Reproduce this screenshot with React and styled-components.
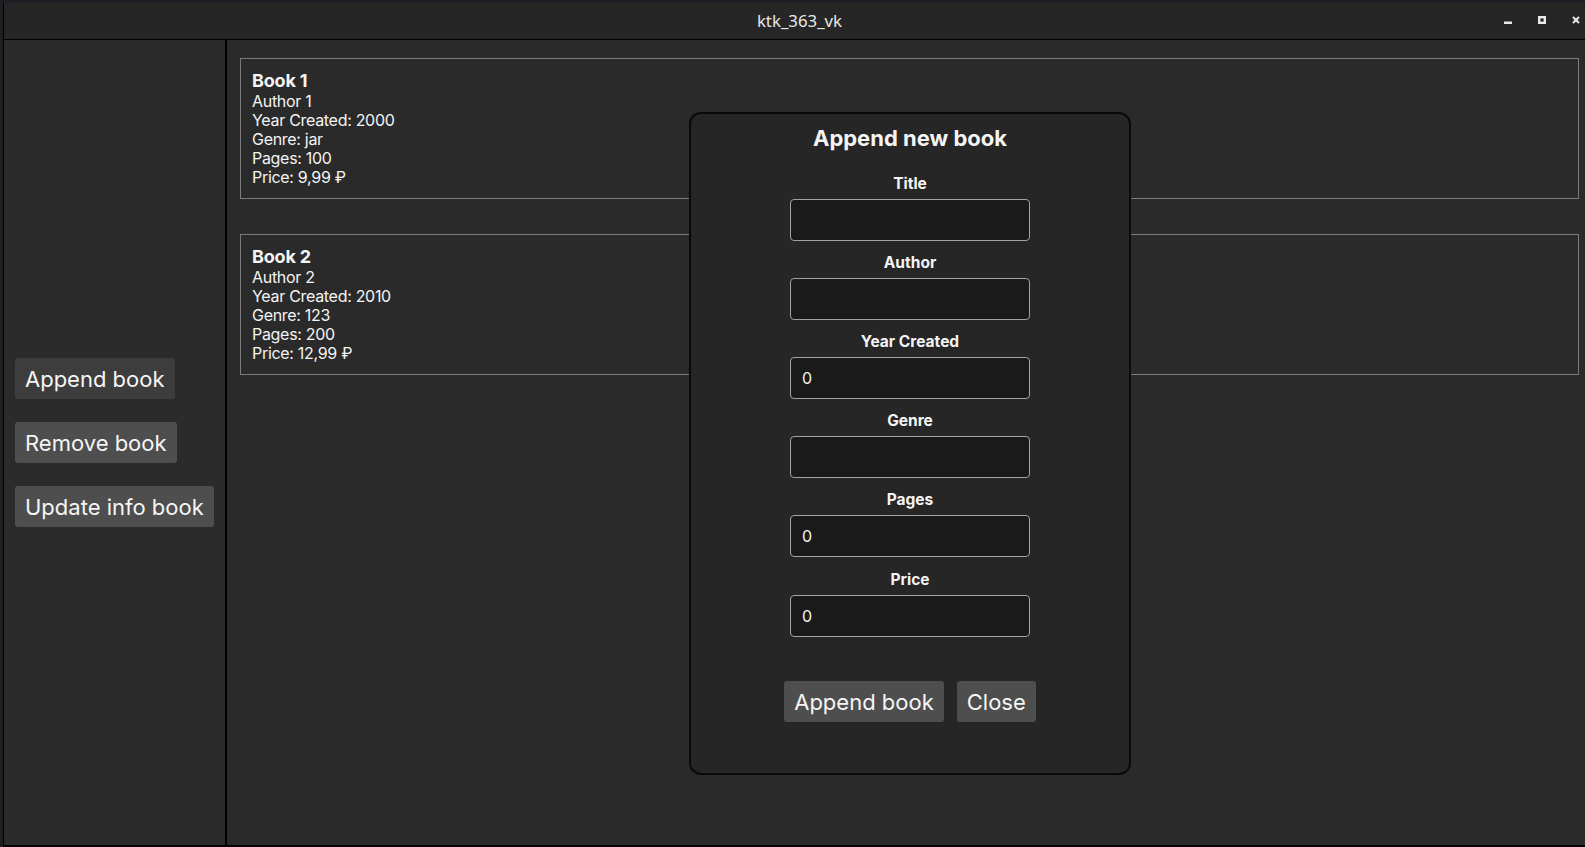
import React from "react";
import styled, { createGlobalStyle } from "styled-components";

const GlobalStyle = createGlobalStyle`
  html, body {
    margin: 0;
    padding: 0;
    background: #1e1f22;
    overflow: hidden;
  }
  * {
    box-sizing: border-box;
  }
`;

const Desktop = styled.div`
  height: 847px;
  padding: 3px 0 0 3px;
`;

const Window = styled.div`
  height: 844px;
  display: flex;
  flex-direction: column;
  border-left: 1px solid #000;
  background: #2b2b2b;
  font-family: Inter, "Noto Sans", sans-serif;
  color: #f4f4f4;
`;

const TitleBar = styled.div`
  height: 37px;
  flex-shrink: 0;
  display: grid;
  grid-template-columns: 1fr auto 1fr;
  align-items: center;
  background: #262626;
  border-bottom: 1px solid #000;
`;

const WindowTitle = styled.div`
  grid-column: 2;
  padding-left: 10px;
  font-family: "Noto Sans", sans-serif;
  font-size: 16.8px;
  color: #e6e6e6;
  margin-top: -2px;
`;

const Controls = styled.div`
  grid-column: 3;
  justify-self: end;
  display: flex;
  align-items: center;
  gap: 26px;
  padding-right: 5px;
  margin-top: -2px;
`;

const Body = styled.div`
  flex: 1;
  display: flex;
  border-bottom: 2px solid #000;
  min-height: 0;
`;

const Sidebar = styled.div`
  width: 223px;
  flex-shrink: 0;
  display: flex;
  flex-direction: column;
  justify-content: center;
  align-items: flex-start;
  gap: 23px;
  padding-left: 11px;
  background: #2b2b2b;
  border-right: 2px solid #000;
`;

const Button = styled.button`
  height: 41px;
  padding: 0 10px;
  border: none;
  border-radius: 3px;
  background: ${(p) => (p.$dim ? "#3d3d3d" : "#4e4e4e")};
  color: #f5f5f5;
  font-family: Inter, "Noto Sans", sans-serif;
  font-size: 22px;
  cursor: pointer;
`;

const Main = styled.div`
  position: relative;
  flex: 1;
  padding: 18px 6px 0 13px;
  background: #2a2a2a;
`;

const Card = styled.div`
  border: 1px solid #7c7c7c;
  padding: 11px 11px 11px;
  margin-bottom: 35px;
`;

const BookTitle = styled.div`
  font-size: 18px;
  font-weight: 700;
  line-height: 22px;
  letter-spacing: -0.2px;
`;

const Line = styled.div`
  font-size: 16px;
  line-height: 19px;
  letter-spacing: -0.3px;
`;

const Modal = styled.div`
  position: absolute;
  left: 462px;
  top: 72px;
  width: 442px;
  height: 663px;
  display: flex;
  flex-direction: column;
  align-items: center;
  padding-top: 10px;
  background: #262626;
  border: 2px solid #0a0a0a;
  border-radius: 12px;
`;

const ModalTitle = styled.h2`
  margin: 0 0 22.7px;
  font-size: 22px;
  line-height: 28px;
  font-weight: 700;
`;

const Field = styled.label`
  display: flex;
  flex-direction: column;
  align-items: center;
  gap: 6px;
  margin-bottom: 13.2px;
`;

const FieldLabel = styled.span`
  font-size: 15.5px;
  line-height: 18px;
  font-weight: 700;
`;

const Input = styled.input`
  width: 240px;
  height: 42px;
  padding: 0 11px;
  border: 1px solid #a3a3a3;
  border-radius: 4px;
  background: #1a1a1a;
  color: #f4f4f4;
  font-family: Inter, "Noto Sans", sans-serif;
  font-size: 16px;
  outline: none;
`;

const ButtonRow = styled.div`
  display: flex;
  gap: 13px;
  margin-top: 31.5px;
`;

const books = [
  { title: "Book 1", author: "Author 1", year: 2000, genre: "jar", pages: 100, price: "9,99" },
  { title: "Book 2", author: "Author 2", year: 2010, genre: "123", pages: 200, price: "12,99" },
];

const fields = [
  { label: "Title", value: "" },
  { label: "Author", value: "" },
  { label: "Year Created", value: "0" },
  { label: "Genre", value: "" },
  { label: "Pages", value: "0" },
  { label: "Price", value: "0" },
];

const App = () => {
  return (
    <>
      <GlobalStyle />
      <Desktop>
        <Window>
          <TitleBar>
            <WindowTitle>ktk_363_vk</WindowTitle>
            <Controls>
              <svg width="8" height="8" viewBox="0 0 8 8">
                <rect x="0" y="5.5" width="8" height="2.5" fill="#e8e8e8" />
              </svg>
              <svg width="8" height="8" viewBox="0 0 8 8">
                <rect x="1.2" y="1.2" width="5.6" height="5.6" fill="none" stroke="#e8e8e8" strokeWidth="2.4" />
              </svg>
              <svg width="8" height="8" viewBox="0 0 8 8">
                <path d="M1 1 L7 7 M7 1 L1 7" stroke="#e8e8e8" strokeWidth="2" />
              </svg>
            </Controls>
          </TitleBar>
          <Body>
            <Sidebar>
              <Button $dim>Append book</Button>
              <Button>Remove book</Button>
              <Button>Update info book</Button>
            </Sidebar>
            <Main>
              {books.map((b) => (
                <Card key={b.title}>
                  <BookTitle>{b.title}</BookTitle>
                  <Line>{b.author}</Line>
                  <Line>Year Created: {b.year}</Line>
                  <Line>Genre: {b.genre}</Line>
                  <Line>Pages: {b.pages}</Line>
                  <Line>Price: {b.price} ₽</Line>
                </Card>
              ))}
              <Modal>
                <ModalTitle>Append new book</ModalTitle>
                {fields.map((f) => (
                  <Field key={f.label}>
                    <FieldLabel>{f.label}</FieldLabel>
                    <Input defaultValue={f.value} />
                  </Field>
                ))}
                <ButtonRow>
                  <Button>Append book</Button>
                  <Button>Close</Button>
                </ButtonRow>
              </Modal>
            </Main>
          </Body>
        </Window>
      </Desktop>
    </>
  );
};

export default App;
